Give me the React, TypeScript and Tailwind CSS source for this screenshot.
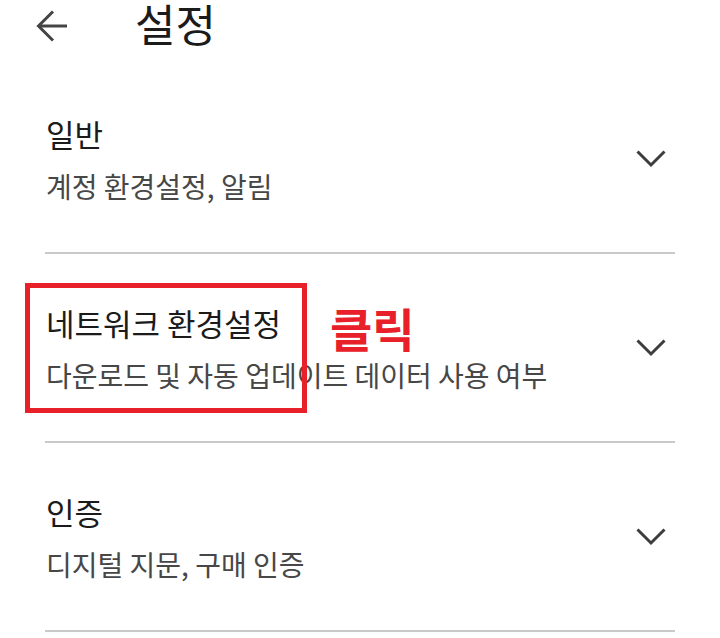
const ArrowBack = () => (
  <svg width="32" height="32" viewBox="0 0 32 32" fill="none" stroke="#444444" strokeWidth="3">
    <path d="M2.5 16H31" />
    <path d="M17 1.5L2.5 16L17 30.5" />
  </svg>
);

const ChevronDown = () => (
  <svg width="30" height="18" viewBox="0 0 30 18" fill="none" stroke="#3d3d3d" strokeWidth="3">
    <path d="M1.5 1.5L15 15L28.5 1.5" />
  </svg>
);

const items = [
  { title: '일반', desc: '계정 환경설정, 알림' },
  { title: '네트워크 환경설정', desc: '다운로드 및 자동 업데이트 데이터 사용 여부' },
  { title: '인증', desc: '디지털 지문, 구매 인증' },
];

const SettingItem = ({ title, desc }: { title: string; desc: string }) => (
  <div className="mx-[45px] h-[189px] border-b-2 border-[#c9c9c9] flex items-center justify-between pl-[1px] pr-[9px]">
    <div>
      <div className="text-[31px] leading-[40px] text-[#1b1b1b]">{title}</div>
      <div className="mt-[14px] text-[28px] leading-[36px] text-[#474747]">{desc}</div>
    </div>
    <ChevronDown />
  </div>
);

export default function App() {
  return (
    <div
      className="relative w-[720px] h-[638px] bg-white overflow-hidden"
      style={{ fontFamily: '"Noto Sans CJK KR", "Noto Sans", sans-serif' }}
    >
      <div className="h-[52px] mb-[13px] flex items-center pl-[36px]">
        <ArrowBack />
        <div className="ml-[67px] pb-[5px] text-[44px] leading-[47px] text-[#1b1b1b]">설정</div>
      </div>

      {items.map((item) => (
        <SettingItem key={item.title} title={item.title} desc={item.desc} />
      ))}

      {/* annotation */}
      <div className="absolute left-[25px] top-[283px] w-[282px] h-[130px] border-[5px] border-[#e8202a]" />
      <div className="absolute left-[330px] top-[297px] text-[46px] leading-[60px] font-bold text-[#e8202a]">
        클릭
      </div>
    </div>
  );
}
